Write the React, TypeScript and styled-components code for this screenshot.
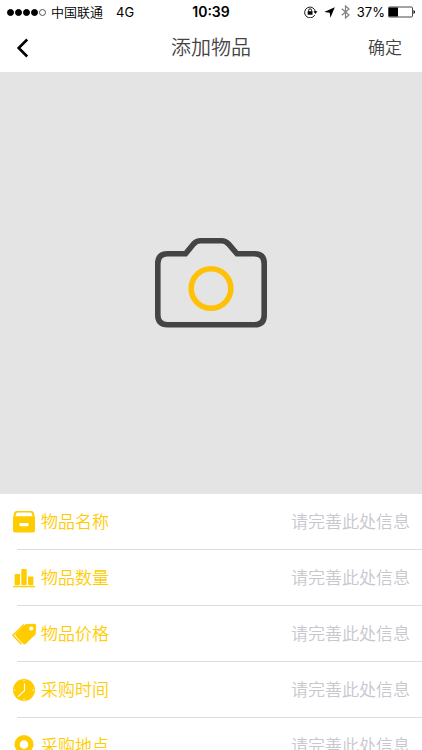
import React from "react";
import styled, { createGlobalStyle } from "styled-components";

const YELLOW = "#ffcc00";

const GlobalStyle = createGlobalStyle`
  *, *::before, *::after { box-sizing: border-box; }
  body {
    margin: 0;
    background: #ffffff;
    font-family: Inter, "Noto Sans CJK SC", sans-serif;
    font-weight: 350;
  }
  button, input { font: inherit; border: 0; padding: 0; background: none; }
`;

const Screen = styled.div`
  display: flex;
  flex-direction: column;
  height: 100vh;
  background: #ffffff;
`;

const StatusBar = styled.div`
  display: grid;
  grid-template-columns: 1fr auto 1fr;
  align-items: center;
  flex: none;
  height: 24px;
  padding: 0 7px;
  font-size: 13px;
  font-weight: 400;
  line-height: 24px;
  color: #000000;
`;

const StatusGroup = styled.div<{ $end?: boolean }>`
  display: flex;
  align-items: center;
  justify-content: ${(p) => (p.$end ? "flex-end" : "flex-start")};
  white-space: nowrap;
`;

const Dots = styled.span`
  display: flex;
  gap: 1px;
  margin-right: 5px;
`;

const Dot = styled.span<{ $empty?: boolean }>`
  width: 7px;
  height: 7px;
  border: 1px solid ${(p) => (p.$empty ? "#555555" : "#000000")};
  border-radius: 50%;
  background: ${(p) => (p.$empty ? "transparent" : "#000000")};
`;

const Carrier = styled.span`
  font-weight: 350;
`;

const Network = styled.span`
  margin-left: 13px;
`;

const Clock = styled.span`
  font-size: 14px;
  font-weight: 600;
`;

const StatusIcons = styled.span`
  display: flex;
  align-items: center;
  gap: 6px;
  margin-right: 7px;
`;

const Battery = styled.svg`
  margin-left: 3px;
`;

const NavBar = styled.header`
  display: grid;
  grid-template-columns: 1fr auto 1fr;
  align-items: center;
  flex: none;
  height: 48px;
  padding: 0 20px;
  color: #444444;
`;

const BackButton = styled.button`
  display: flex;
  justify-self: start;
  margin-left: -4px;
  color: #000000;
  cursor: pointer;
`;

const Title = styled.h1`
  margin: 0;
  font-size: 20px;
  font-weight: 350;
  line-height: 28px;
`;

const ConfirmButton = styled.button`
  justify-self: end;
  font-size: 17px;
  line-height: 24px;
  color: #444444;
  cursor: pointer;
`;

const Content = styled.main`
  flex: 1;
  min-height: 0;
  overflow-y: auto;
  scrollbar-width: none;
`;

const PhotoButton = styled.button`
  display: flex;
  align-items: center;
  justify-content: center;
  width: 100%;
  aspect-ratio: 1;
  background: #e4e4e4;
  cursor: pointer;
`;

const Field = styled.label`
  display: flex;
  align-items: center;
  height: 56px;
  margin-left: 17px;
  padding-right: 12px;
  border-bottom: 1px solid #dcdcde;
  font-size: 17px;
  line-height: 24px;
`;

const FieldIcon = styled.span`
  display: flex;
  flex: none;
  margin-left: -6px;
  margin-right: 4px;
`;

const FieldName = styled.span`
  flex: none;
  color: ${YELLOW};
`;

const FieldInput = styled.input`
  flex: 1;
  min-width: 0;
  height: 32px;
  color: #444444;
  text-align: right;
  outline: none;
  &::placeholder { color: #c7c7cd; opacity: 1; }
`;

function BoxIcon() {
  return (
    <svg width="26" height="24" viewBox="0 0 26 24" fill={YELLOW} aria-hidden="true">
      <path fillRule="evenodd" d="M5.500 1h15q1.800 0 2.300 1.700L24 8v12.500q0 2-2 2H4q-2 0-2-2V8l1.200-5.300Q3.700 1 5.500 1zM6.500 2.600q-1 0-1.200.9L4.300 6.200h17.400L20.700 3.500Q20.500 2.600 19.500 2.600zM9.800 13q-1.600 0-1.600 1.600t1.600 1.600h6.400q1.600 0 1.600-1.600T16.200 13z" />
    </svg>
  );
}

function BarsIcon() {
  return (
    <svg width="26" height="24" viewBox="0 0 26 24" fill={YELLOW} aria-hidden="true">
      <rect x="3.600" y="8" width="5.400" height="11" rx="0.800" />
      <rect x="10.300" y="3" width="5.400" height="16" rx="0.800" />
      <rect x="17" y="10.500" width="5.400" height="8.500" rx="0.800" />
      <rect x="2" y="19.800" width="22" height="1.500" rx="0.500" />
    </svg>
  );
}

function TagsIcon() {
  return (
    <svg width="26" height="24" viewBox="0 0 26 24" aria-hidden="true">
      <path d="M12.500 3 1.900 13.200l8 8.600" fill="none" stroke={YELLOW} strokeWidth="1.500" strokeLinejoin="round" strokeLinecap="round" />
      <path fill={YELLOW} fillRule="evenodd" d="M15.800 2 23 1.700q2.200 0 2.200 2.200l-.4 6.900q0 1.200-.9 2.100l-9 8.800q-1.500 1.400-2.900 0l-7.200-7.700q-1.200-1.300 0-2.600l9-8.700q.9-.7 2-.7zM20.300 4.400a2.100 2.100 0 1 0 0 4.200a2.100 2.100 0 0 0 0-4.200z" />
    </svg>
  );
}

function ClockIcon() {
  return (
    <svg width="26" height="24" viewBox="0 0 26 24" aria-hidden="true">
      <circle cx="13" cy="12" r="11" fill={YELLOW} />
      <path d="M13.500 5.500v7.200l-6.500 6" fill="none" stroke="#ffffff" strokeWidth="1.100" />
      <path d="M13 1.800v1.400M13 20.800v1.400M2.800 12h1.400M21.800 12h1.400" stroke="#ffffff" strokeWidth="1" />
    </svg>
  );
}

function PinIcon() {
  return (
    <svg width="26" height="24" viewBox="0 0 26 24" aria-hidden="true">
      <path fill={YELLOW} fillRule="evenodd" d="M13 1a9.500 9.500 0 0 1 9.500 9.500c0 5-5 9-9.500 13-4.500-4-9.500-8-9.500-13A9.500 9.500 0 0 1 13 1zM13 6.200a4.300 4.300 0 1 0 0 8.600a4.300 4.300 0 0 0 0-8.600z" />
    </svg>
  );
}

function CameraIcon() {
  return (
    <svg width="114" height="92" viewBox="0 0 114 92" fill="none" strokeWidth="5.600" aria-hidden="true">
      <path stroke="#444444" d="M13.500 16.800H31.500L39.500 7Q42.500 3.800 46.500 3.800H67.500Q71.500 3.800 74.500 7L83 16.800H100.500Q110.200 16.800 110.200 26.500V78Q110.200 87.800 100.500 87.800H13.500Q3.800 87.800 3.800 78V26.500Q3.800 16.800 13.500 16.800Z" />
      <circle cx="57" cy="51.500" r="19.800" stroke="#ffc107" />
    </svg>
  );
}

function LockIcon() {
  return (
    <svg width="14" height="12" viewBox="0 0 14 12" fill="none" stroke="#000000" aria-hidden="true">
      <path d="M10.800 9A5.400 5.400 0 1 1 11.400 6" strokeWidth="0.900" />
      <path d="M9.400 5.200h4l-2 2.800z" fill="#000000" stroke="none" />
      <rect x="3.700" y="5.200" width="4.800" height="3.500" fill="#000000" stroke="none" />
      <path d="M4.600 5.400V4.300a1.500 1.500 0 0 1 3 0v1.100" strokeWidth="0.900" />
    </svg>
  );
}

function LocationIcon() {
  return (
    <svg width="11" height="11" viewBox="0 0 11 11" aria-hidden="true">
      <path d="M10.800 0.200 6.400 10.800 5.700 5.700 0.200 5z" fill="#000000" />
    </svg>
  );
}

function BluetoothIcon() {
  return (
    <svg width="9" height="14" viewBox="0 0 9 14" fill="none" stroke="#808080" strokeWidth="1.200" aria-hidden="true">
      <path d="M0.800 3.800 8 10 4.500 13V1L8 4 0.800 10.200" />
    </svg>
  );
}

function BatteryIcon() {
  return (
    <Battery width="27" height="12" viewBox="0 0 27 12" role="img" aria-label="电池">
      <rect x="0.500" y="1" width="24" height="10" rx="1" fill="none" stroke="#333333" strokeWidth="0.900" />
      <rect x="1" y="1.500" width="9" height="9" rx="0.500" fill="#000000" />
      <path d="M25.500 4Q27 4.500 27 6t-1.500 2z" fill="#000000" />
    </Battery>
  );
}

const fields = [
  { id: "name", label: "物品名称", Icon: BoxIcon },
  { id: "quantity", label: "物品数量", Icon: BarsIcon },
  { id: "price", label: "物品价格", Icon: TagsIcon },
  { id: "time", label: "采购时间", Icon: ClockIcon },
  { id: "place", label: "采购地点", Icon: PinIcon },
];

export default function App() {
  return (
    <Screen>
      <GlobalStyle />
      <StatusBar>
        <StatusGroup>
          <Dots>
            <Dot />
            <Dot />
            <Dot />
            <Dot />
            <Dot $empty />
          </Dots>
          <Carrier>中国联通</Carrier>
          <Network>4G</Network>
        </StatusGroup>
        <Clock>10:39</Clock>
        <StatusGroup $end>
          <StatusIcons>
            <LockIcon />
            <LocationIcon />
            <BluetoothIcon />
          </StatusIcons>
          <span>37%</span>
          <BatteryIcon />
        </StatusGroup>
      </StatusBar>
      <NavBar>
        <BackButton type="button" aria-label="返回">
          <svg width="13" height="20" viewBox="0 0 13 20" fill="none" stroke="currentColor" strokeWidth="2.600" aria-hidden="true">
            <path d="M11.200 1.500 2.700 10l8.500 8.500" />
          </svg>
        </BackButton>
        <Title>添加物品</Title>
        <ConfirmButton type="button">确定</ConfirmButton>
      </NavBar>
      <Content>
        <PhotoButton type="button" aria-label="添加照片">
          <CameraIcon />
        </PhotoButton>
        <form>
          {fields.map(({ id, label, Icon }) => (
            <Field key={id} htmlFor={id}>
              <FieldIcon>
                <Icon />
              </FieldIcon>
              <FieldName>{label}</FieldName>
              <FieldInput id={id} name={id} type="text" placeholder="请完善此处信息" />
            </Field>
          ))}
        </form>
      </Content>
    </Screen>
  );
}
